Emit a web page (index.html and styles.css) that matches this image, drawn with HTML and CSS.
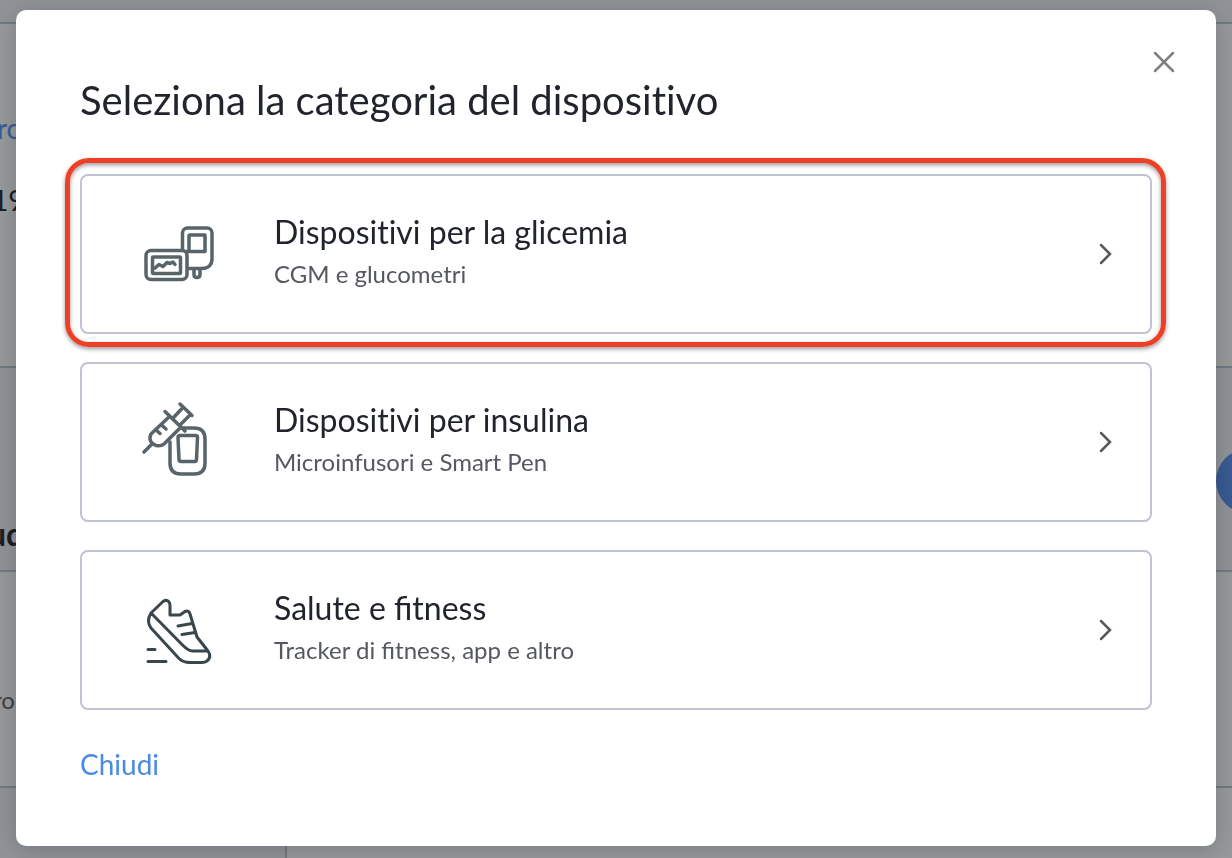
FILE: index.html
```html
<!DOCTYPE html>
<html lang="it">

<head>
    <meta charset="utf-8">
    <meta name="viewport" content="width=device-width, initial-scale=1">
    <title>Seleziona la categoria del dispositivo</title>
    <link rel="stylesheet" href="styles.css">
</head>

<body>
    <div class="page" aria-hidden="true">
        <div class="page-top"></div>
        <div class="page-panel page-profile">
            <p class="page-link">ro</p>
            <p class="page-value">19</p>
        </div>
        <div class="page-heading">
            <p class="page-title">ud</p>
            <span class="page-bubble"></span>
        </div>
        <div class="page-panel page-detail">
            <p class="page-note">ro</p>
        </div>
        <div class="page-columns">
            <div class="page-side"></div>
            <div class="page-main"></div>
        </div>
    </div>

    <div class="dialog" role="dialog" aria-modal="true" aria-labelledby="dialog-title">
        <button class="dialog-close" type="button" aria-label="Chiudi finestra">
            <svg width="24" height="24" viewBox="0 0 24 24">
                <path d="M3 3l18 18M21 3L3 21"/>
            </svg>
        </button>
        <h1 class="dialog-title" id="dialog-title">Seleziona la categoria del dispositivo</h1>

        <div class="categories">
            <button class="category highlighted" type="button">
                <svg class="category-icon" width="100" height="90" viewBox="0 -2 100 90">
                    <rect x="16" y="39.500" width="41" height="29" rx="5"/>
                    <rect x="22.500" y="46" width="28" height="16.500" rx="1"/>
                    <path d="M25 57l4-3.500 4 2 4-4 3 1 3-1.500 2 2.500"/>
                    <path d="M52.500 39V22a5 5 0 0 1 5-5H77a5 5 0 0 1 5 5v26c0 6-4 9.500-10 9.500H58"/>
                    <path d="M59 40V25a1 1 0 0 1 1-1h15v16.500H56M64 58v5.500q0 3 3 3t3-3V58"/>
                </svg>
                <span class="category-text">
                    <span class="category-name no-ligatures">Dispositivi per la glicemia</span>
                    <span class="category-info">CGM e glucometri</span>
                </span>
                <svg class="category-arrow" width="16" height="24" viewBox="0 0 16 24">
                    <path d="M3 3l9 9-9 9"/>
                </svg>
            </button>

            <button class="category" type="button">
                <svg class="category-icon" width="100" height="100" viewBox="0 2 100 100">
                    <path d="M40 52v21q0 11 11 11h13q11 0 11-11V49q0-11-11-11H53"/>
                    <path d="M50 45.500h15.500q2 0 2 2l-1 22q0 2-2 2H51q-2 0-2-2l-1-22q0-2 2-2z"/>
                    <path d="M35 21.500l20 19.500M50 14l12 11.500M40 26L21 44q-3.500 8 5 11.500 5 1 8-1.500L50.500 37.500M44 27l9-9.500M50 35l9-9M25.500 39.500l4.500 4M31 34.500l5 4.500M14 62l8-8"/>
                </svg>
                <span class="category-text">
                    <span class="category-name no-ligatures">Dispositivi per insulina</span>
                    <span class="category-info">Microinfusori e Smart Pen</span>
                </span>
                <svg class="category-arrow" width="16" height="24" viewBox="0 0 16 24">
                    <path d="M3 3l9 9-9 9"/>
                </svg>
            </button>

            <button class="category" type="button">
                <svg class="category-icon shoe" width="100" height="90" viewBox="0 0 100 90">
                    <path d="M21 28l12-11.500q2.500-2 5-.5 2 1.500 2 4V30h10l5-3.500q4-1.500 5 2.500l7 23 11 14q4 6-1 10-2 1.500-5 1.500H60q-7 0-11-4L21 43q-5-7 0-15l31.500 32q6 6 10 6H78M48 41l14-2.500M52 49.500l13-2M18 64.500h7M18 76.500h18"/>
                </svg>
                <span class="category-text">
                    <span class="category-name">Salute e fitness</span>
                    <span class="category-info">Tracker di fitness, app e altro</span>
                </span>
                <svg class="category-arrow" width="16" height="24" viewBox="0 0 16 24">
                    <path d="M3 3l9 9-9 9"/>
                </svg>
            </button>
        </div>

        <a class="dialog-cancel" href="#">Chiudi</a>
    </div>
</body>

</html>
```
FILE: styles.css
```css
* {
    box-sizing: border-box;
}

body {
    margin: 0;
    font-family: Lato, "Liberation Sans", sans-serif;
    color: #21242c;
    overflow: hidden;
}

p, h1 {
    margin: 0;
}

/* dimmed page behind the dialog */
.page {
    display: flex;
    flex-direction: column;
    height: 100vh;
    background: #909398;
    color: #1c1f24;
}

.page-top {
    height: 22px;
}

.page-panel {
    background: #969a9a;
    border-top: 2px solid #727a83;
    border-bottom: 2px solid #727a83;
}

.page-profile {
    height: 346px;
    padding-top: 88px;
}

.page-link {
    color: #385b98;
    font-size: 28px;
    line-height: 32px;
    text-indent: -3px;
}

.page-value {
    margin-top: 40px;
    font-size: 28px;
    line-height: 32px;
    text-indent: -8px;
}

.page-heading {
    display: flex;
    align-items: center;
    justify-content: space-between;
    height: 202px;
    padding-top: 24px;
}

.page-title {
    margin-top: 104px;
    font-size: 32px;
    font-weight: bold;
    text-indent: -12px;
}

.page-bubble {
    width: 64px;
    height: 64px;
    margin: 0 -48px 0 0;
    border-radius: 50%;
    background: #385b92;
}

.page-detail {
    height: 218px;
    padding-top: 112px;
}

.page-note {
    color: #3b4043;
    font-size: 24px;
    line-height: 32px;
    text-indent: -7px;
}

.page-columns {
    display: flex;
    flex: 1;
}

.page-side {
    width: 287px;
    border-right: 2px solid #727a83;
}

.page-main {
    flex: 1;
    background: #969a9a;
}

/* dialog */
.dialog {
    position: fixed;
    top: 10px;
    left: 16px;
    right: 16px;
    padding: 64px;
    background: #fff;
    border-radius: 10px;
    box-shadow: 0 4px 24px rgba(0, 0, 0, 0.2);
}

.dialog-close {
    position: absolute;
    top: 40px;
    right: 40px;
    padding: 0;
    border: 0;
    background: none;
    cursor: pointer;
}

.dialog-close svg {
    display: block;
    fill: none;
    stroke: #7f8084;
    stroke-width: 2.5;
    stroke-linecap: round;
}

.dialog-title {
    margin-bottom: 48px;
    font-size: 40px;
    font-weight: normal;
    line-height: 52px;
}

/* keeps the "ti" in "dispositivo" as two letters */
.dialog-title, .no-ligatures {
    font-variant-ligatures: none;
}

.categories {
    display: flex;
    flex-direction: column;
    gap: 28px;
    margin-bottom: 36px;
}

.category {
    position: relative;
    display: flex;
    align-items: center;
    height: 160px;
    padding: 0 36px 0 48px;
    border: 2px solid #c0c4d1;
    border-radius: 8px;
    background: #fff;
    color: inherit;
    font-family: inherit;
    text-align: left;
    cursor: pointer;
}

.highlighted::after {
    content: "";
    position: absolute;
    inset: -18px -16px -15px -17px;
    border: 5px solid #ee4026;
    border-radius: 24px;
    box-shadow: 0 2px 4px rgba(0, 0, 0, 0.4), inset 0 2px 4px rgba(0, 0, 0, 0.4);
    pointer-events: none;
}

.category-icon {
    fill: none;
    stroke: #58646a;
    stroke-width: 3.5;
    stroke-linecap: round;
    stroke-linejoin: round;
}

.shoe {
    stroke: #39464c;
    stroke-width: 3;
}

.category-text {
    display: flex;
    flex: 1;
    flex-direction: column;
    margin-left: 44px;
    padding-bottom: 4px;
}

.category-name {
    font-size: 32px;
    line-height: 44px;
}

.category-info {
    color: #55585e;
    font-size: 24px;
    line-height: 40px;
}

.category-arrow {
    fill: none;
    stroke: #55585e;
    stroke-width: 2.5;
    stroke-linecap: round;
}

.dialog-cancel {
    display: inline-block;
    color: #4a8ae6;
    font-size: 28px;
    line-height: 36px;
    text-decoration: none;
}
```
